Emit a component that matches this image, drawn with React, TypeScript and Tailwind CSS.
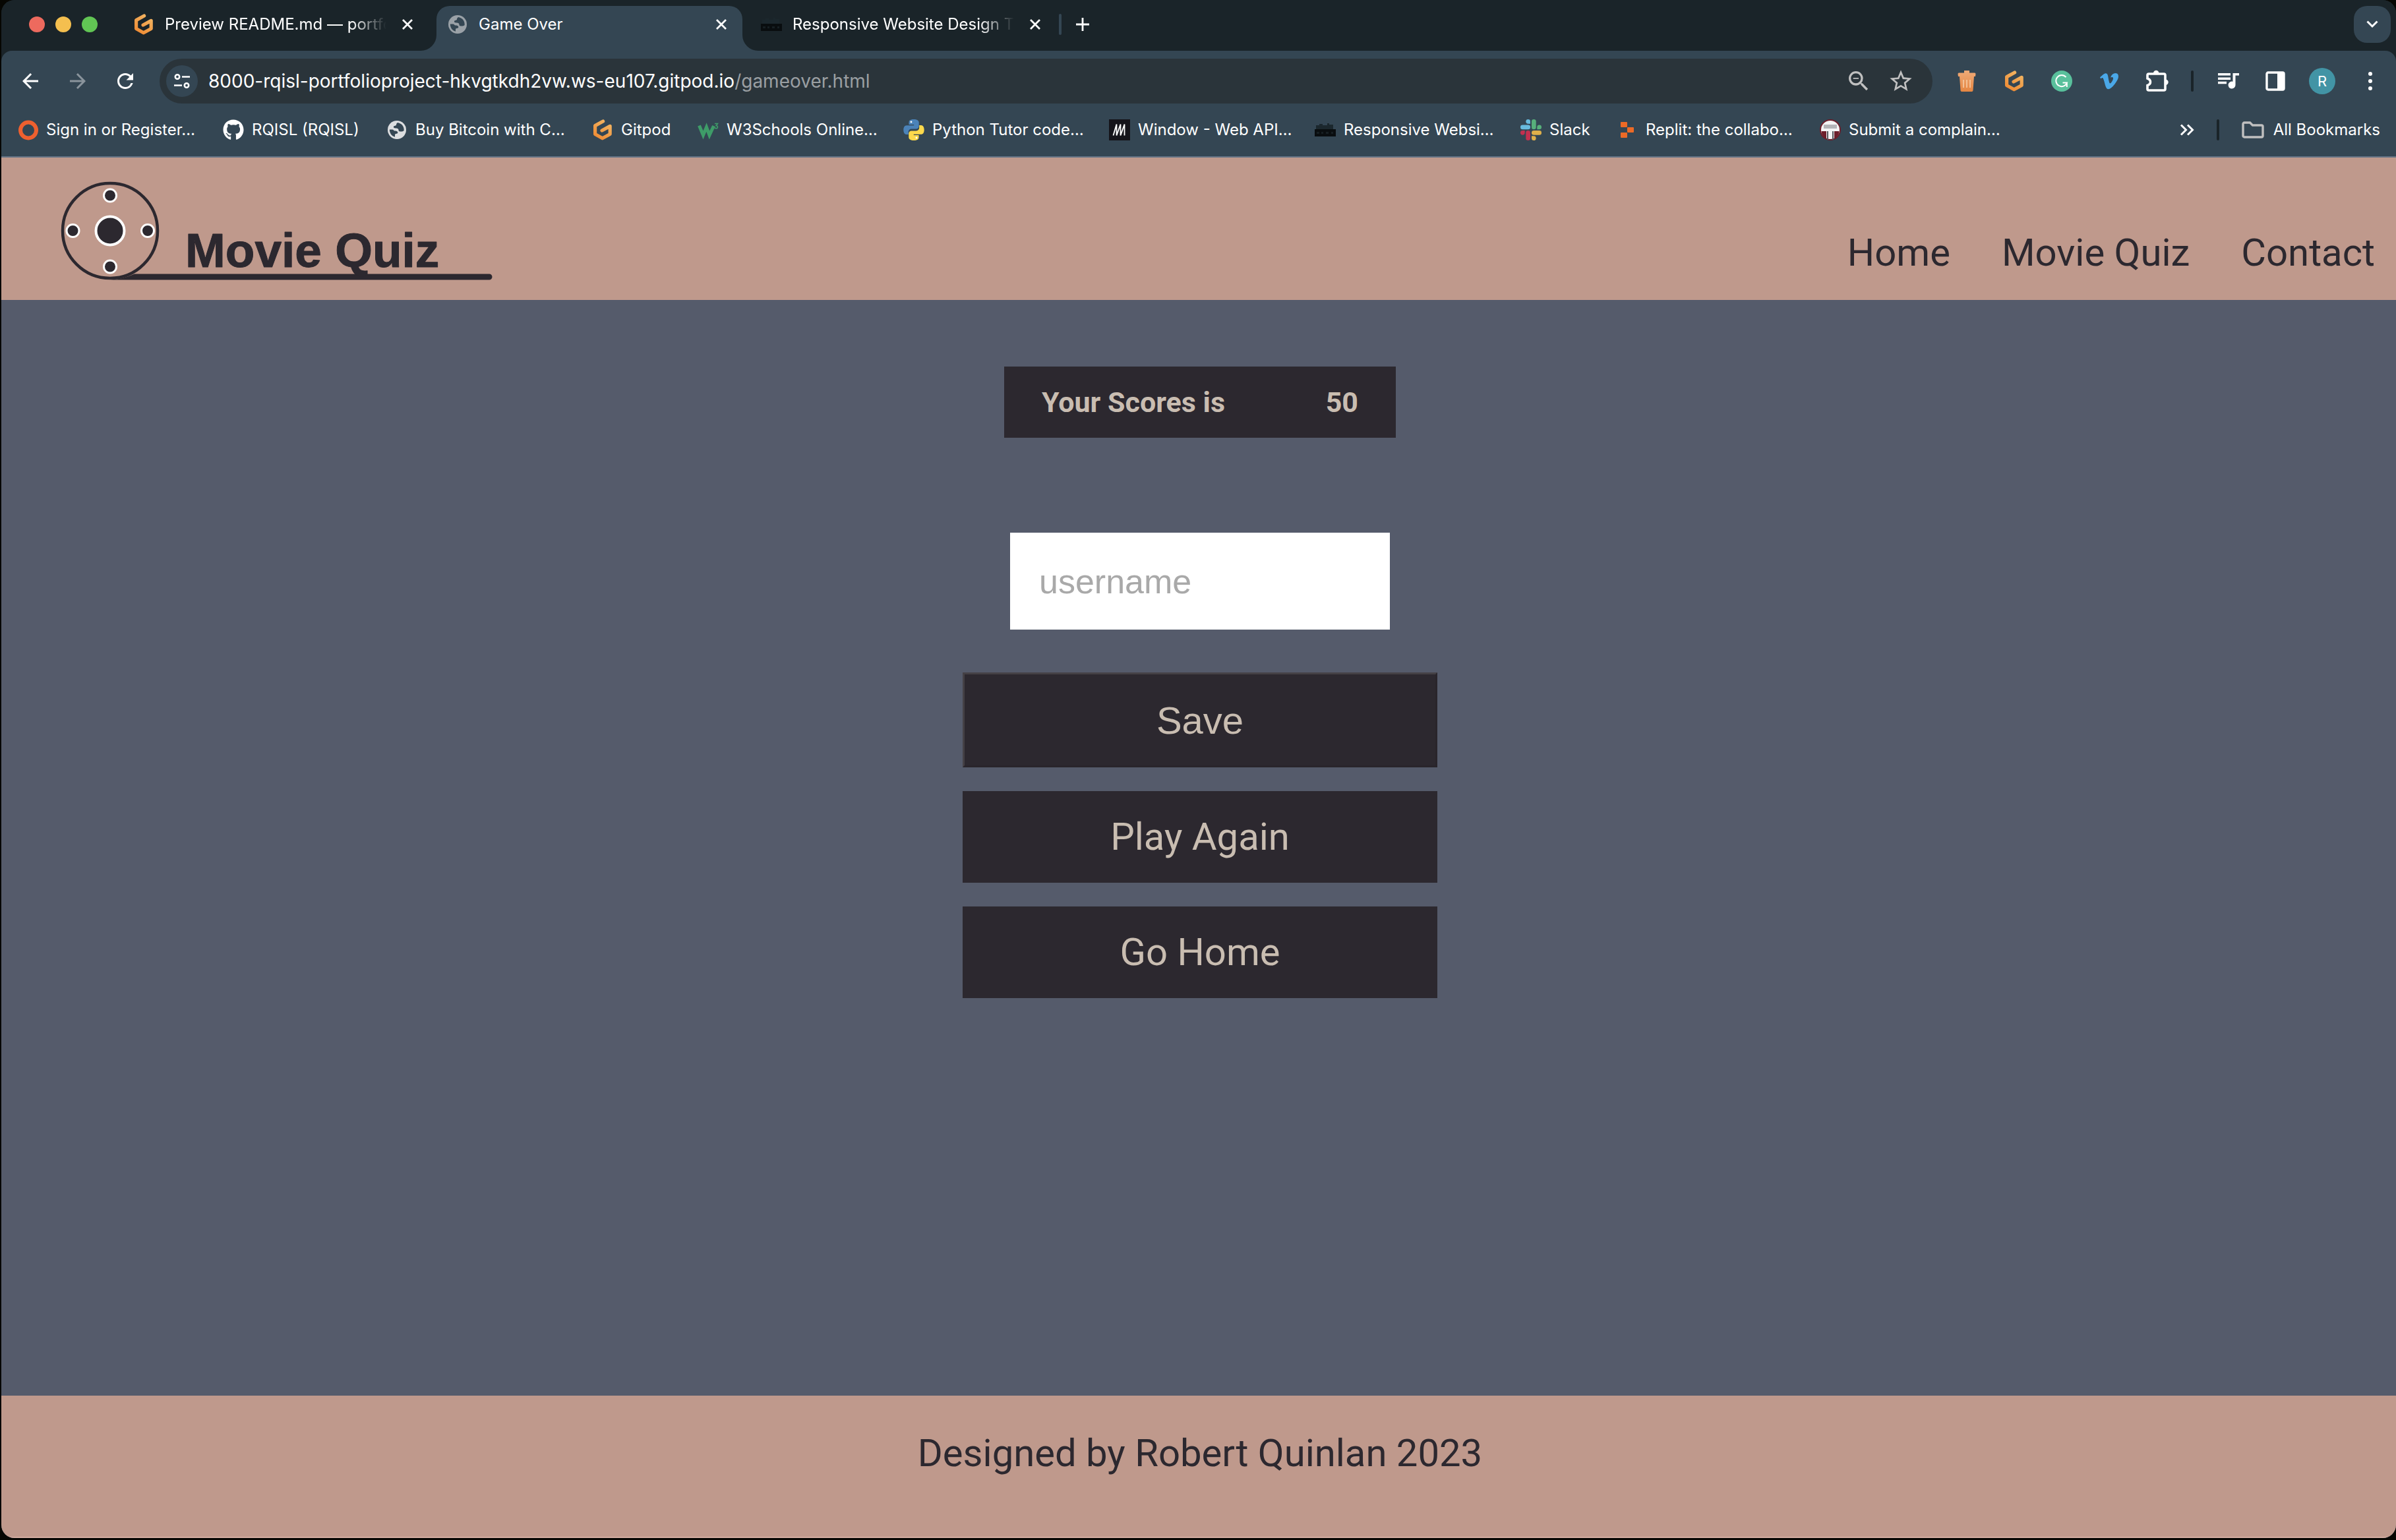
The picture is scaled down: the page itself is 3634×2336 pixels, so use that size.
import React from "react";
import {
  MdArrowBack,
  MdArrowForward,
  MdOutlineZoomOut,
  MdRefresh,
  MdStarBorder,
} from "react-icons/md";
import { FaGithub, FaVimeoV } from "react-icons/fa";

type IconProps = { className?: string };

function GitpodIcon({ className = "" }: IconProps) {
  return (
    <svg viewBox="0 0 32 32" className={`size-8 ${className}`} fill="none" aria-hidden="true">
      <defs>
        <linearGradient id="gitpod" x1="26" y1="2" x2="8" y2="30" gradientUnits="userSpaceOnUse">
          <stop stopColor="#f3b866" />
          <stop offset="1" stopColor="#ee8a33" />
        </linearGradient>
      </defs>
      <path
        d="M16.600 3 4.600 9.600V22.500L15.700 28.800 27.200 22.500V10.400L15 17"
        stroke="url(#gitpod)"
        strokeWidth="5.200"
        strokeLinecap="round"
        strokeLinejoin="round"
      />
    </svg>
  );
}

function GlobeIcon({ className = "" }: IconProps) {
  return (
    <svg viewBox="0 0 28 28" className={`size-7 ${className}`} aria-hidden="true">
      <circle cx="14" cy="14" r="14" fill="currentColor" />
      <path
        d="M15.500 3c-2 .5-2.500 2-2.500 3.500s-3.500 1-4 2.500c-.5 1.700 1 2.500 3 2.500 3.500 0 4.500 1 4.500 3s2 2 3.500 2c2 0 3.500-.5 4.700-1.500.3-6-3-10.500-9.200-12Z"
        className="fill-[#344653]"
      />
      <path
        d="M2.800 13.500c0 5.500 3.200 9.800 8.200 11.200v-3c0-1.500 1-1.700 2.500-1.900 1.800-.2 2.200-1.500 1.500-2.800-.8-1.300-2.500-1.500-4.500-1.500-1.300 0-1.500-2-3.500-2Z"
        className="fill-[#344653]"
      />
    </svg>
  );
}

function RingIcon() {
  return (
    <svg viewBox="0 0 32 32" className="size-8" fill="none" aria-hidden="true">
      <circle cx="17" cy="16.500" r="12" stroke="#ee602f" strokeWidth="6" />
    </svg>
  );
}

function W3Icon() {
  return (
    <svg viewBox="0 0 32 32" className="size-8" fill="none" aria-hidden="true">
      <path d="M2.500 9.500 8.500 24l5-12 4.500 12 6.500-14" stroke="#3e9c68" strokeWidth="5" />
      <path d="M26 6.500h4.500l-2.300 3c3 .2 3 4.200 0 4.200-1.200 0-2-.5-2.400-1.200" stroke="#3e9c68" strokeWidth="1.600" />
    </svg>
  );
}

function PythonIcon() {
  return (
    <svg viewBox="0 0 32 32" className="size-8" aria-hidden="true">
      <path
        d="M15.900 0C9.500 0 8.500 2.500 8.500 5v3h7.700v1.200H5C2 9.200.3 12 .3 16s1.700 7 4.500 7h3v-3.800c0-2.700 2.200-4.700 4.800-4.700h7.200c2.200 0 3.900-1.800 3.900-4V5c0-3.300-3-5-7.800-5Z"
        fill="#4b83b9"
      />
      <path
        d="M16.100 32c6.400 0 7.400-2.500 7.400-5v-3h-7.700v-1.200H27c3 0 4.700-2.800 4.700-6.800s-1.700-7-4.500-7h-3v3.800c0 2.700-2.200 4.700-4.800 4.700h-7.200c-2.200 0-3.900 1.800-3.900 4V27c0 3.300 3 5 7.800 5Z"
        fill="#fbd94c"
      />
      <circle cx="12" cy="4" r="1.400" fill="#fff" />
      <circle cx="20" cy="28" r="1.400" fill="#fff" />
    </svg>
  );
}

function MdnIcon() {
  return (
    <svg viewBox="0 0 32 32" className="size-8" fill="none" aria-hidden="true">
      <rect width="32" height="32" fill="#15141a" />
      <path d="M6.500 24.500 11.500 7.500V24.500L17.500 7.500V24.500L23.500 7.500V24.500" stroke="#fff" strokeWidth="1.800" />
    </svg>
  );
}

function SkylineIcon() {
  return (
    <svg viewBox="0 0 32 32" className="size-8" aria-hidden="true">
      <path d="M2 9h5V7h5v2h7V6h3v2h6v8H2Z" fill="#1b272d" />
      <path d="M0 15h32v11H0Z" fill="#090d0f" />
      <path d="M3 19h4v3H3Zm7 0h3v3h-3Zm7 0h4v3h-4Zm8 0h3v3h-3Z" fill="#161e22" />
    </svg>
  );
}

function SlackIcon() {
  return (
    <svg viewBox="0 0 32 32" className="size-8" aria-hidden="true">
      <g fill="#68bbdf">
        <path d="M11.700 0a3.300 3.300 0 0 0 0 6.700H15V3.300A3.300 3.300 0 0 0 11.700 0Z" />
        <rect x="0" y="8.500" width="15" height="6.700" rx="3.300" />
      </g>
      <g fill="#57b07b">
        <path d="M32 11.800a3.300 3.300 0 0 0-6.700 0v3.400h3.400a3.300 3.300 0 0 0 3.300-3.400Z" />
        <rect x="17" y="0" width="6.700" height="15.200" rx="3.300" />
      </g>
      <g fill="#dfb04a">
        <path d="M20.300 32a3.300 3.300 0 0 0 0-6.700H17v3.400a3.300 3.300 0 0 0 3.300 3.300Z" />
        <rect x="17" y="17" width="15" height="6.700" rx="3.300" />
      </g>
      <g fill="#c3304f">
        <path d="M0 20.300a3.300 3.300 0 0 0 6.700 0V17H3.300A3.300 3.300 0 0 0 0 20.300Z" />
        <rect x="8.300" y="17" width="6.700" height="15" rx="3.300" />
      </g>
    </svg>
  );
}

function ReplitIcon() {
  return (
    <svg viewBox="0 0 32 32" className="size-8" fill="#ec6a26" aria-hidden="true">
      <rect x="6" y="4" width="10" height="8" rx="1" />
      <rect x="16" y="12" width="10" height="8" rx="1" />
      <rect x="6" y="20" width="10" height="8" rx="1" />
    </svg>
  );
}

function ComplaintIcon() {
  return (
    <svg viewBox="0 0 32 32" className="size-8" aria-hidden="true">
      <circle cx="16" cy="16" r="15" fill="#f4f4f5" stroke="#6d1e2b" strokeWidth="2" />
      <path d="M2.500 18H10v12A15 15 0 0 1 2.500 18ZM29.500 18H22v12a15 15 0 0 0 7.500-12Z" fill="#6d1e2b" />
      <path d="M6 8h20v6H6Z" fill="#b4b4b8" />
      <path d="M12 18v13M20 18v13" stroke="#55555c" strokeWidth="2" />
    </svg>
  );
}

function TrashIcon() {
  return (
    <svg viewBox="0 0 32 32" className="size-8" aria-hidden="true">
      <defs>
        <linearGradient id="bin" x1="0" y1="0" x2="0" y2="1">
          <stop stopColor="#f0ab78" />
          <stop offset="1" stopColor="#e58642" />
        </linearGradient>
      </defs>
      <path d="M12 0h8v3.500h8q1.500 0 1.500 2L29 9h-2l-1.500 21q0 2-2 2h-15q-2 0-2-2L5 9H3l-.5-3.500q0-2 1.500-2h8Z" fill="url(#bin)" />
      <path d="M11 14v12M16 14v12M21 14v12" stroke="#f8cfa9" strokeWidth="1.500" />
    </svg>
  );
}

function GrammarlyIcon() {
  return (
    <svg viewBox="0 0 32 32" className="size-8" fill="none" aria-hidden="true">
      <circle cx="16" cy="16" r="16" fill="#59c09c" />
      <path d="M22.500 10A8.600 8.600 0 1 0 24 18.500H17.500M23.800 25v-6.500" stroke="#fff" strokeWidth="2" />
    </svg>
  );
}

function PuzzleIcon() {
  return (
    <svg viewBox="0 0 34 34" className="size-[34px]" fill="none" aria-hidden="true">
      <path
        d="M4 6h23a2 2 0 0 1 2 2v21a2 2 0 0 1-2 2H4a2 2 0 0 1-2-2v-5.500c6-2 6-8.500 0-10.500V8a2 2 0 0 1 2-2Z"
        stroke="#fff"
        strokeWidth="3.600"
      />
      <path d="M11 5a4.200 4.200 0 0 1 8.400 0ZM29.500 14.500a4.200 4.200 0 0 1 0 8.400Z" fill="#fff" />
    </svg>
  );
}

function QueueIcon() {
  return (
    <svg viewBox="0 0 32 26" className="h-[26px] w-8" aria-hidden="true">
      <path
        d="M0 1h19v3.500H0ZM0 7.500h19V11H0ZM0 13.800h13v3.500H0ZM22.500 1H32v3.500h-5.500V19a5.500 5.500 0 1 1-4-5.200Z"
        fill="#fff"
      />
    </svg>
  );
}

function SidePanelIcon() {
  return (
    <svg viewBox="0 0 30 30" className="size-[30px]" fill="none" aria-hidden="true">
      <rect x="2" y="2" width="26" height="26" rx="2" stroke="#fff" strokeWidth="3.400" />
      <path d="M18 2h10v26H18Z" fill="#fff" />
    </svg>
  );
}

function CloseIcon() {
  return (
    <svg viewBox="0 0 16 16" className="size-4" fill="none" aria-hidden="true">
      <path d="m1 1 14 14M15 1 1 15" stroke="#fff" strokeWidth="2.800" />
    </svg>
  );
}

function PlusIcon() {
  return (
    <svg viewBox="0 0 20 20" className="size-5" fill="none" aria-hidden="true">
      <path d="M10 0v20M0 10h20" stroke="#fff" strokeWidth="2.800" />
    </svg>
  );
}

function ChevronIcon() {
  return (
    <svg viewBox="0 0 18 12" className="h-3 w-[18px]" fill="none" aria-hidden="true">
      <path d="m1.500 1.500 7.500 7.500 7.500-7.500" stroke="#fff" strokeWidth="3" />
    </svg>
  );
}

function DoubleChevronIcon() {
  return (
    <svg viewBox="0 0 22 18" className="h-[18px] w-[22px]" fill="none" aria-hidden="true">
      <path d="m2 1.500 7.500 7.500L2 16.500M12 1.500l7.500 7.500-7.500 7.500" stroke="#fff" strokeWidth="3" />
    </svg>
  );
}

function FolderIcon() {
  return (
    <svg viewBox="0 0 34 26" className="h-[26px] w-[34px]" fill="none" aria-hidden="true">
      <path
        d="M4 2h8.500l4 4H30a2 2 0 0 1 2 2v14a2 2 0 0 1-2 2H4a2 2 0 0 1-2-2V4a2 2 0 0 1 2-2Z"
        stroke="#c0c0c0"
        strokeWidth="3.400"
      />
    </svg>
  );
}

function SiteInfoIcon() {
  return (
    <svg viewBox="0 0 24 22" className="h-[22px] w-6" fill="none" stroke="#fff" strokeWidth="2.600" aria-hidden="true">
      <circle cx="5" cy="4.500" r="3.200" />
      <path d="M12 4.500h12M0 17.500h12" />
      <circle cx="19" cy="17.500" r="3.200" />
    </svg>
  );
}

const TAB_TITLE =
  "ml-4 w-[336px] whitespace-nowrap [mask-image:linear-gradient(to_right,black_84%,transparent)]";

function TabStrip() {
  return (
    <div className="flex h-[77px] items-end bg-[#1a2429]">
      <div className="flex h-[68px] w-[660px] items-center pb-3">
        <div className="flex w-[200px] shrink-0 gap-4 pl-[42px]">
          <button aria-label="Close window" className="size-6 rounded-full bg-[#ed6a5e]" />
          <button aria-label="Minimize window" className="size-6 rounded-full bg-[#f4bf4f]" />
          <button aria-label="Zoom window" className="size-6 rounded-full bg-[#61c554]" />
        </div>
        <GitpodIcon className="shrink-0" />
        <span className={TAB_TITLE}>Preview README.md — portfo</span>
        <button aria-label="Close tab" className="ml-6">
          <CloseIcon />
        </button>
      </div>

      <div className="relative flex h-[68px] w-[464px] items-center rounded-t-[20px] bg-[#344653] pr-6 pb-3 pl-[18px]">
        <svg viewBox="0 0 24 24" className="absolute bottom-0 -left-6 size-6 fill-[#344653]" aria-hidden="true">
          <path d="M24 0v24H0A24 24 0 0 0 24 0Z" />
        </svg>
        <svg viewBox="0 0 24 24" className="absolute -right-6 bottom-0 size-6 fill-[#344653]" aria-hidden="true">
          <path d="M0 0v24h24A24 24 0 0 1 0 0Z" />
        </svg>
        <GlobeIcon className="text-[#9aa1a7]" />
        <span className="ml-[18px] flex-1">Game Over</span>
        <button aria-label="Close tab">
          <CloseIcon />
        </button>
      </div>

      <div className="flex h-[68px] items-center pb-3 pl-7">
        <SkylineIcon />
        <span className={TAB_TITLE}>Responsive Website Design T</span>
        <button aria-label="Close tab" className="ml-6">
          <CloseIcon />
        </button>
        <span className="ml-7 h-8 w-1 rounded-full bg-[#344653]" />
        <button aria-label="New tab" className="ml-[22px]">
          <PlusIcon />
        </button>
      </div>

      <button
        aria-label="Search tabs"
        className="mr-2 mb-3 ml-auto flex size-14 items-center justify-center rounded-[20px] bg-[#344653]"
      >
        <ChevronIcon />
      </button>
    </div>
  );
}

function Toolbar() {
  return (
    <div className="flex h-[92px] items-center pr-9 pl-[26px]">
      <button aria-label="Back">
        <MdArrowBack className="size-9" />
      </button>
      <button aria-label="Forward" className="ml-9 text-[#8a949c]">
        <MdArrowForward className="size-9" />
      </button>
      <button aria-label="Reload" className="ml-9">
        <MdRefresh className="size-9" />
      </button>
      <div className="ml-[34px] flex h-[68px] flex-1 items-center rounded-full bg-[#2a343a] pr-7 pl-[10px]">
        <button
          aria-label="Site information"
          className="flex size-12 items-center justify-center rounded-full bg-[#344653]"
        >
          <SiteInfoIcon />
        </button>
        <div className="ml-4 flex-1 text-[28px] leading-[36px] whitespace-nowrap">
          8000-rqisl-portfolioproject-hkvgtkdh2vw.ws-eu107.gitpod.io
          <span className="text-[#9a9fa2]">/gameover.html</span>
        </div>
        <button aria-label="Zoom" className="text-[#c0c0c0]">
          <MdOutlineZoomOut className="size-10" />
        </button>
        <button aria-label="Bookmark this page" className="ml-6 text-[#c0c0c0]">
          <MdStarBorder className="size-10" />
        </button>
      </div>
      <div className="ml-9 flex items-center gap-10">
        <button aria-label="Bin">
          <TrashIcon />
        </button>
        <button aria-label="Gitpod">
          <GitpodIcon />
        </button>
        <button aria-label="Grammarly">
          <GrammarlyIcon />
        </button>
        <button aria-label="Vimeo" className="text-[#4aa8e8]">
          <FaVimeoV className="size-8" />
        </button>
        <button aria-label="Extensions">
          <PuzzleIcon />
        </button>
      </div>
      <span className="ml-[34px] h-8 w-1 rounded-full bg-[#1a2429]" />
      <div className="ml-[37px] flex items-center gap-10">
        <button aria-label="Media controls">
          <QueueIcon />
        </button>
        <button aria-label="Side panel">
          <SidePanelIcon />
        </button>
        <button
          aria-label="Profile"
          className="-ml-1 flex size-10 items-center justify-center rounded-full bg-[#4294a5] text-[22px]"
        >
          R
        </button>
        <button aria-label="Menu" className="ml-[10px] flex flex-col gap-[5px]">
          <span className="size-[6px] rounded-full bg-white" />
          <span className="size-[6px] rounded-full bg-white" />
          <span className="size-[6px] rounded-full bg-white" />
        </button>
      </div>
    </div>
  );
}

const BOOKMARKS: { label: string; icon: React.ReactNode; width: string }[] = [
  { label: "Sign in or Register…", icon: <RingIcon />, width: "w-[226px]" },
  { label: "RQISL (RQISL)", icon: <FaGithub className="size-8" />, width: "w-[162px]" },
  { label: "Buy Bitcoin with C…", icon: <GlobeIcon className="mx-[2px] text-[#dcdee0]" />, width: "w-[226px]" },
  { label: "Gitpod", icon: <GitpodIcon />, width: "w-[74px]" },
  { label: "W3Schools Online…", icon: <W3Icon />, width: "w-[226px]" },
  { label: "Python Tutor code…", icon: <PythonIcon />, width: "w-[226px]" },
  { label: "Window - Web API…", icon: <MdnIcon />, width: "w-[226px]" },
  { label: "Responsive Websi…", icon: <SkylineIcon />, width: "w-[226px]" },
  { label: "Slack", icon: <SlackIcon />, width: "w-[60px]" },
  { label: "Replit: the collabo…", icon: <ReplitIcon />, width: "w-[222px]" },
  { label: "Submit a complain…", icon: <ComplaintIcon />, width: "w-[226px]" },
];

function BookmarksBar() {
  return (
    <nav aria-label="Bookmarks" className="flex h-[70px] items-center border-b-2 border-[#657485] pr-6 pb-3 pl-6">
      <div className="flex flex-1 gap-[42px]">
        {BOOKMARKS.map((b) => (
          <a key={b.label} href="#" className="flex items-center gap-3">
            {b.icon}
            <span className={`whitespace-nowrap ${b.width}`}>{b.label}</span>
          </a>
        ))}
      </div>
      <button aria-label="More bookmarks">
        <DoubleChevronIcon />
      </button>
      <span className="mx-[34px] h-8 w-1 rounded-full bg-[#1a2429]" />
      <button className="flex items-center gap-[14px]">
        <FolderIcon />
        All Bookmarks
      </button>
    </nav>
  );
}

function Logo() {
  return (
    <svg viewBox="0 0 656 150" className="h-[150px] w-[656px]" fill="#2c282f" role="img" aria-label="Movie Quiz">
      <circle cx="75" cy="75" r="72" fill="none" stroke="#2c282f" strokeWidth="4.500" />
      <path d="M75 149.500H650a4.500 4.500 0 0 0 0-9H112Q96 148 75 149.500Z" />
      <g stroke="#fff" strokeWidth="3">
        <circle cx="75" cy="21.500" r="9.500" />
        <circle cx="18.500" cy="75" r="9.500" />
        <circle cx="132" cy="75" r="9.500" />
        <circle cx="75" cy="129.500" r="9.500" />
        <circle cx="75" cy="75" r="21.500" strokeWidth="4" />
      </g>
      <text
        x="189"
        y="130"
        className="font-['Liberation_Sans'] text-[73px] font-bold"
        stroke="#2c282f"
        strokeWidth="1"
        strokeLinejoin="round"
      >
        Movie Quiz
      </text>
    </svg>
  );
}

const ACTION = "flex w-[720px] items-center justify-center bg-[#2c282f] text-[58px]";

export default function App() {
  return (
    <div className="flex min-h-screen flex-col bg-[#060602] pb-[3px] pl-[2px]">
      <div className="flex flex-1 flex-col overflow-hidden rounded-[20px]">
        <div className="bg-[#1a2429] font-[Inter,sans-serif] text-[24px] leading-8 text-white">
          <TabStrip />
          <div className="rounded-t-[16px] bg-[#344653]">
            <Toolbar />
            <BookmarksBar />
          </div>
        </div>

        <div className="flex flex-1 flex-col border-b-2 border-[#d3aca1] bg-[#555b6b] font-[Roboto,sans-serif]">
          <header className="flex h-[216px] items-start justify-between bg-[#bf998c] pr-8 pl-[90px]">
            <a href="#" className="pt-9">
              <Logo />
            </a>
            <nav aria-label="Site" className="flex gap-[78px] pt-[108px] text-[58px] leading-[72px] text-[#2c282f]">
              <a href="#">Home</a>
              <a href="#">Movie Quiz</a>
              <a href="#">Contact</a>
            </nav>
          </header>

          <main className="flex flex-1 flex-col items-center pt-[101px] pl-1 text-[#c9bdb1]">
            <h1 className="flex h-[108px] w-[594px] items-center justify-between bg-[#2c282f] px-[57px] text-[43px] font-bold">
              <span>Your Scores is</span>
              <span>50</span>
            </h1>
            <form className="mt-36 flex flex-col items-center" onSubmit={(e) => e.preventDefault()}>
              <input
                type="text"
                aria-label="username"
                placeholder="username"
                className="h-[147px] w-[576px] bg-white px-11 font-['Liberation_Sans',sans-serif] text-[52px] text-[#2c282f] placeholder:text-[#a9a9a9]"
              />
              <button
                type="submit"
                className={`mt-[65px] h-36 border-[3px] border-t-[#454146] border-r-[#29252b] border-b-[#29252b] border-l-[#454146] font-['Liberation_Sans',sans-serif] ${ACTION}`}
              >
                Save
              </button>
            </form>
            <a href="#" className={`mt-9 h-[139px] ${ACTION}`}>
              Play Again
            </a>
            <a href="#" className={`mt-9 h-[139px] ${ACTION}`}>
              Go Home
            </a>
          </main>

          <footer className="h-[214px] bg-[#bf998c] pt-[51px] pl-1 text-center text-[58px] leading-[72px] text-[#2c282f]">
            Designed by Robert Quinlan 2023
          </footer>
        </div>
      </div>
    </div>
  );
}
